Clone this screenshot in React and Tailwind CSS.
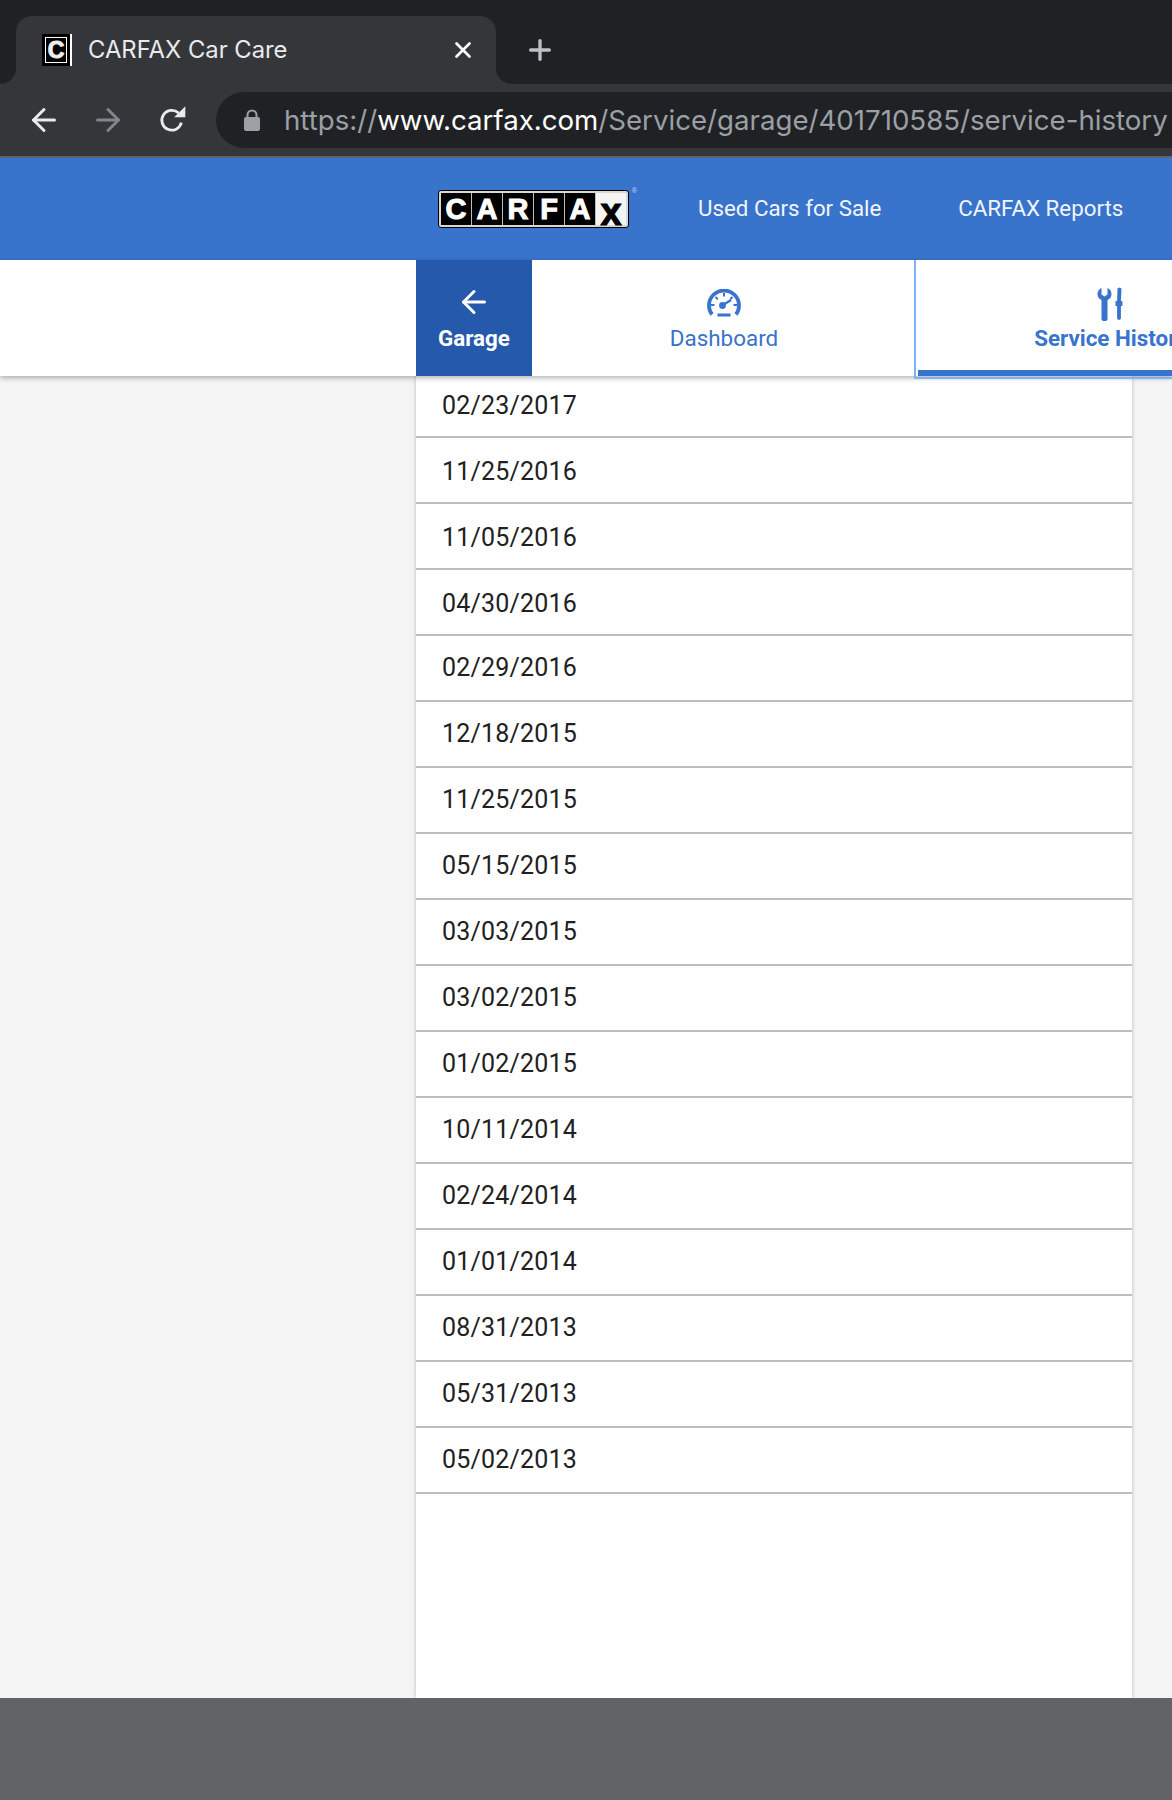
import React from 'react';
import { ArrowLeft, ArrowRight, X, Plus } from 'lucide-react';

const dates = [
  '11/25/2016', '11/05/2016', '04/30/2016', '02/29/2016', '12/18/2015', '11/25/2015',
  '05/15/2015', '03/03/2015', '03/02/2015', '01/02/2015', '10/11/2014', '02/24/2014',
  '01/01/2014', '08/31/2013', '05/31/2013', '05/02/2013',
];

function ReloadIcon() {
  return (
    <svg className="w-[32px] h-[32px] ml-[2px]" viewBox="0 0 30 30">
      <path d="M23.800 17.500a9.300 9.300 0 1 1-2.600-9" fill="none" stroke="#e8eaed" strokeWidth="2.600" />
      <path d="M17 12.500h10.500V2z" fill="#e8eaed" />
    </svg>
  );
}

function LockIcon() {
  return (
    <svg className="w-[18px] h-[24px]" viewBox="0 0 18 24">
      <path d="M4.500 10V7a4.500 4.500 0 0 1 9 0v3" fill="none" stroke="#9aa0a6" strokeWidth="2" />
      <rect x="1" y="9" width="16" height="14" rx="2" fill="#9aa0a6" />
    </svg>
  );
}

function GaugeIcon() {
  return (
    <svg className="w-[34px] h-[28px]" viewBox="0 0 34 28" fill="none">
      <path d="M5 25.500A15 15 0 1 1 29 25.500" stroke="#3873cc" strokeWidth="3.800" />
      <path d="M17 4v3.500M8.500 8l2.300 2.300M25.500 8l-2.300 2.300M4 16h3.500M26.500 16h3.500" stroke="#3873cc" strokeWidth="2" />
      <circle cx="15.500" cy="16.500" r="3.400" fill="#3873cc" />
      <path d="M16 16l8-5" stroke="#3873cc" strokeWidth="2.400" />
      <rect x="10.500" y="24.500" width="13" height="3" fill="#3873cc" />
    </svg>
  );
}

function ToolsIcon() {
  return (
    <svg className="w-[30px] h-[34px]" viewBox="0 0 30 34" fill="#3873cc">
      <path d="M5.500 1v6.500l3 2 3-2V1c2.500 1 4 3.500 4 6 0 3-1.500 5-4 6v19a3 2 0 0 1-6 0V13C3 12 1.500 10 1.500 7c0-2.500 1.500-5 4-6z" />
      <path d="M21.500 1.500l2-1 2 1-.6 12.500h1.500v5h-1.500v12.500a2 2 0 0 1-3.800 0V19h-1.600v-5h1.600z" />
    </svg>
  );
}

function Logo() {
  const cell = 'flex items-center justify-center w-[31px] bg-black text-white border-r border-[#bdbdbd] [-webkit-text-stroke:1px_white]';
  return (
    <div className="relative flex h-[38px] w-[191px] p-[2px] rounded-[3px] bg-[#d8d8d8] border border-black font-['Liberation_Sans',sans-serif] font-bold text-[29px] leading-none">
      <div className={cell}>C</div>
      <div className={cell}>A</div>
      <div className={cell}>R</div>
      <div className={cell}>F</div>
      <div className={cell}>A</div>
      <div className="flex items-end justify-center flex-1 bg-[#f4f4f4] text-black text-[38px] leading-[26px] [-webkit-text-stroke:1px_black]">x</div>
      <span className="absolute -top-[4px] -right-[9px] text-[7px] font-normal text-[#cfdcf2]">®</span>
    </div>
  );
}

export default function App() {
  return (
    <div className="h-[1800px] flex flex-col overflow-hidden bg-[#f5f5f5] font-['Roboto',sans-serif]">
      {/* Browser tabs */}
      <div className="h-[84px] shrink-0 bg-[#202124] pt-4 pl-4 flex items-stretch">
        <div className="relative w-[480px] bg-[#35363a] rounded-t-2xl flex items-center pl-[26px] pr-[20px] font-['Inter',sans-serif] text-[23.800px] text-[#e8eaed]">
          <div className="absolute -left-4 bottom-0 w-4 h-4 bg-[#35363a]">
            <div className="w-4 h-4 bg-[#202124] rounded-br-2xl" />
          </div>
          <div className="absolute -right-4 bottom-0 w-4 h-4 bg-[#35363a]">
            <div className="w-4 h-4 bg-[#202124] rounded-bl-2xl" />
          </div>
          <div className="w-[30px] h-[32px] bg-black border-r-2 border-white p-[3px] mr-[16px] flex">
            <div className="flex-1 border border-white bg-black flex items-center justify-center font-['Liberation_Sans',sans-serif] font-bold text-[23px] text-[#eeeeee] leading-none [-webkit-text-stroke:1px_#eeeeee]">C</div>
          </div>
          <span className="flex-1">CARFAX Car Care</span>
          <X className="w-[26px] h-[26px] text-white" strokeWidth={2.5} />
        </div>
        <div className="ml-[28px] flex items-center">
          <Plus className="w-[32px] h-[32px] text-[#bdc1c6]" strokeWidth={2.5} />
        </div>
      </div>

      {/* Browser toolbar */}
      <div className="h-[74px] shrink-0 bg-[#35363a] border-b-2 border-[#5f6368] flex items-start pt-2 pl-[26px]">
        <div className="h-14 flex items-center gap-[28px]">
          <ArrowLeft className="w-[36px] h-[36px] text-[#e8eaed]" strokeWidth={2} />
          <ArrowRight className="w-[36px] h-[36px] text-[#80868b]" strokeWidth={2} />
          <ReloadIcon />
        </div>
        <div className="ml-[28px] flex-1 h-14 bg-[#202124] rounded-l-[28px] flex items-center pl-[27px] gap-[23px] font-['Inter',sans-serif] text-[27.650px] whitespace-nowrap text-[#9aa0a6] overflow-hidden">
          <LockIcon />
          <span className="mt-[2px]">https://<span className="text-white">www.carfax.com</span>/Service/garage/401710585/service-history</span>
        </div>
      </div>

      {/* Site header */}
      <header className="h-[102px] shrink-0 bg-[#3873cc] flex items-start pt-8 pl-[438px] text-[22.300px] text-[#f2f5fb]">
        <Logo />
        <span className="ml-[69px] mt-[2px]">Used Cars for Sale</span>
        <span className="ml-[77px] mt-[2px]">CARFAX Reports</span>
      </header>

      {/* Tab navigation */}
      <nav className="relative z-10 h-[116px] shrink-0 bg-white shadow-[0_2px_5px_rgba(0,0,0,0.3)] pl-[416px] flex text-[22.400px] overflow-x-clip">
        <div className="w-[116px] shrink-0 bg-[#2559ac] text-white font-bold flex flex-col items-center pt-[24px]">
          <ArrowLeft className="w-[36px] h-[36px]" strokeWidth={2} />
          <span className="mt-[2px]">Garage</span>
        </div>
        <div className="w-[384px] shrink-0 text-[#3873cc] flex flex-col items-center pt-[29px]">
          <GaugeIcon />
          <span className="mt-[5px]">Dashboard</span>
        </div>
        <div className="relative shrink-0 -ml-[2px] w-[392px] h-[119px] text-[#3873cc] font-bold flex flex-col items-center pt-[27px] border-l-2 border-b-2 border-[#7ab3f7]">
          <ToolsIcon />
          <span className="mt-[1px]">Service History</span>
          <div className="absolute left-[2px] right-0 bottom-[1px] h-[6px] bg-[#3873cc]" />
        </div>
      </nav>

      {/* Service dates */}
      <main className="flex-1 min-h-0 pl-[416px]">
        <div className="w-[716px] h-full bg-white shadow-[0_0_4px_rgba(0,0,0,0.25)] text-[25px] text-[#212121] tracking-[0.2px]">
          <div className="h-[62px] pl-[26px] flex items-center border-b-2 border-[#bdbdbd]">02/23/2017</div>
          {dates.map((d, i) => (
            <div key={i} className={`h-[66px] pl-[26px] flex items-center border-b-2 border-[#bdbdbd] ${i < 3 ? 'pt-[4px]' : ''}`}>{d}</div>
          ))}
        </div>
      </main>

      <footer className="h-[102px] shrink-0 bg-[#626366] relative z-10" />
    </div>
  );
}
